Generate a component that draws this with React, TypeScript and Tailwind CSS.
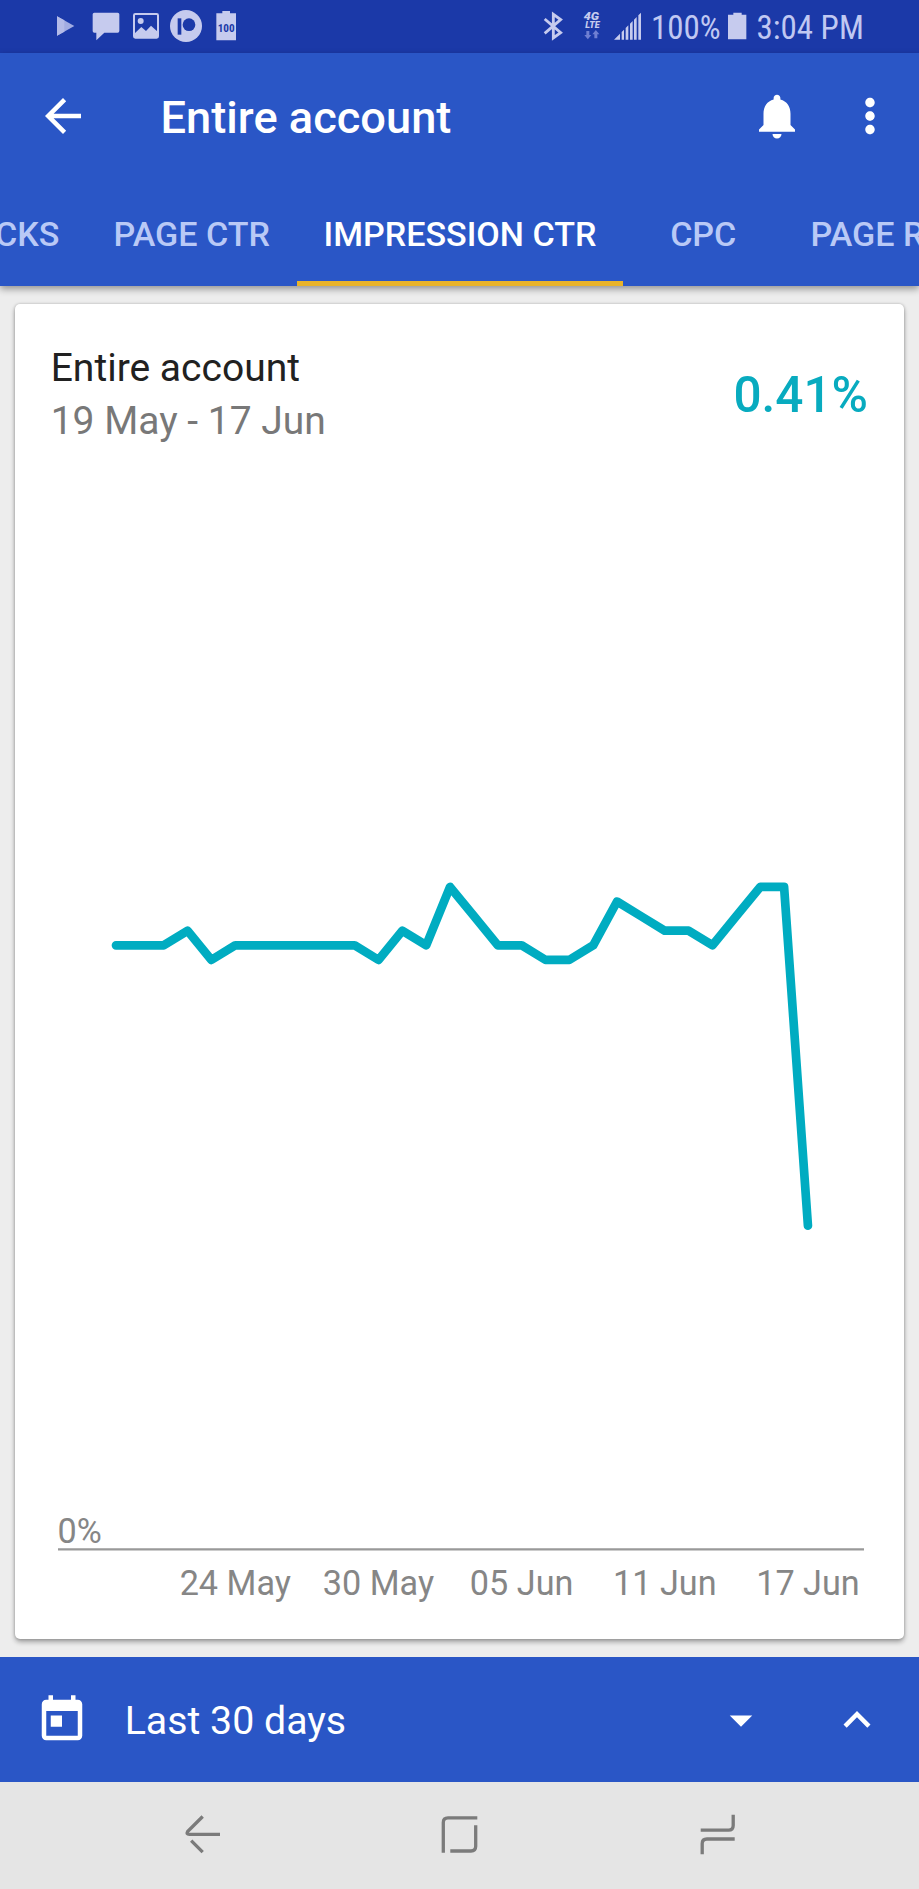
import type { ReactNode } from "react";

const TINT = "#c6cbee";
const STATUS_BG = "#1b39a8";

function MaterialIcon({ d, className }: { d: string; className?: string }) {
  return (
    <svg viewBox="0 0 24 24" className={`size-[54px] shrink-0 fill-white ${className ?? ""}`}>
      <path d={d} />
    </svg>
  );
}

const icons = {
  back: "M20 11H7.83l5.59-5.59L12 4l-8 8 8 8 1.41-1.41L7.83 13H20v-2z",
  bell: "M12 22c1.1 0 2-.9 2-2h-4c0 1.1.89 2 2 2zm6-6v-5c0-3.07-1.64-5.64-4.5-6.32V4c0-.83-.67-1.5-1.5-1.5s-1.5.67-1.5 1.5v.68C7.63 5.36 6 7.92 6 11v5l-2 2v1h16v-1l-2-2z",
  more: "M12 8.1c1.16 0 2.1-.94 2.1-2.1S13.160 3.9 12 3.9 9.9 4.840 9.9 6s.94 2.1 2.1 2.1zm0 1.8c-1.160 0-2.1.94-2.1 2.1s.94 2.1 2.1 2.1 2.1-.94 2.1-2.1-.94-2.1-2.1-2.1zm0 6c-1.160 0-2.1.94-2.1 2.1s.94 2.1 2.1 2.1 2.1-.94 2.1-2.1-.94-2.1-2.1-2.1z",
  today: "M19 3h-1V1h-2v2H8V1H6v2H5c-1.11 0-1.99.9-1.99 2L3 19c0 1.1.89 2 2 2h14c1.1 0 2-.9 2-2V5c0-1.100-.9-2-2-2zm0 16H5V8h14v11zM7 10h5v5H7z",
  dropDown: "M7 10l5 5 5-5z",
  expandLess: "M12 8l-6 6 1.41 1.41L12 10.83l4.59 4.58L18 14z",
};

function StatusBar() {
  return (
    <header className="flex h-[53px] shrink-0 items-start bg-[#1b39a8] font-['Roboto_Condensed',Roboto,sans-serif] text-[33px] leading-[56px] text-[#c0c8f2]">
      <svg viewBox="165 0 66 159" className="ml-[55px] h-[53px] w-[22px] shrink-0">
        <path d="M171 49L223 78L171 107Z" fill="#a2ace2" />
        <path d="M171 49L193 61V95L171 107Z" fill="#b4bbe8" />
      </svg>
      <svg viewBox="273 0 90 159" className="ml-[14px] h-[53px] w-[30px] shrink-0" fill={TINT}>
        <path d="M283 38H353Q358 38 358 43V93Q358 98 353 98H313L289 121V98H283Q278 98 278 93V43Q278 38 283 38Z" />
      </svg>
      <svg viewBox="393 0 90 159" className="ml-[10px] h-[53px] w-[30px] shrink-0">
        <rect x="402" y="42" width="72" height="71" rx="4" fill="none" stroke={TINT} strokeWidth="6" />
        <circle cx="422" cy="63" r="9" fill={TINT} />
        <path d="M402 112V102L424 81L438 93L453 77L474 96V112Z" fill={TINT} />
      </svg>
      <svg viewBox="507 0 102 159" className="ml-[8px] h-[53px] w-[34px] shrink-0">
        <circle cx="558" cy="78" r="48" fill={TINT} />
        <rect x="533" y="55" width="11" height="49" fill={STATUS_BG} />
        <circle cx="567" cy="74" r="19" fill={STATUS_BG} />
      </svg>
      <svg viewBox="645 0 69 159" className="ml-[12px] h-[53px] w-[23px] shrink-0">
        <path d="M667 33H690V40H708V121H649V40H667Z" fill={TINT} />
        <text x="678.500" y="95" textAnchor="middle" fontSize="35" fontWeight="700" fontFamily="Roboto Condensed, Roboto" fill={STATUS_BG} textLength="51" lengthAdjust="spacingAndGlyphs">100</text>
      </svg>

      <svg viewBox="64 0 66 159" className="ml-[303.500px] h-[53px] w-[22px] shrink-0" fill="none" stroke={TINT} strokeWidth="8.500">
        <path d="M72 57L120 98L98 114V43L120 59L72 100" />
      </svg>
      <svg viewBox="186 0 60 159" className="ml-[18.700px] h-[53px] w-[20px] shrink-0">
        <g fill={TINT} fontFamily="Roboto" fontStyle="italic" fontWeight="900">
          <text x="191" y="60" fontSize="30" textLength="46" lengthAdjust="spacingAndGlyphs">4G</text>
          <text x="196" y="83" fontSize="26" textLength="43" lengthAdjust="spacingAndGlyphs">LTE</text>
        </g>
        <g fill="#6f7fd2">
          <path d="M199 93H208V105H214L203.500 118L193 105H199Z" />
          <path d="M223 115H232V103H238L227.500 90L217 103H223Z" />
        </g>
      </svg>
      <svg viewBox="276 0 87 159" className="ml-[10.500px] h-[53px] w-[29px] shrink-0" fill={TINT}>
        <path d="M279 119L297 101V119ZM302 96L309 89V119H302ZM314 84L322 76V119H314ZM327 71L335 63V119H327ZM339 59L347 51V119H339ZM352 46L360 38V119H352Z" />
      </svg>
      <span className="ml-[9.200px] w-[70px] shrink-0 whitespace-nowrap">100%</span>
      <svg viewBox="624 0 60 159" className="ml-[6.600px] h-[53px] w-[20px] shrink-0" fill={TINT}>
        <path d="M643 38H668V44H682V118H627V44H643Z" />
      </svg>
      <span className="ml-[9px] whitespace-nowrap">3:04 PM</span>
    </header>
  );
}

function Tab({ className, active, children }: { className: string; active?: boolean; children: ReactNode }) {
  return (
    <div
      className={`flex h-full shrink-0 items-center whitespace-nowrap border-b-[5px] pt-[8px] ${
        active ? "border-[#e8b32a] text-white" : "border-transparent text-[#b9c9f6]"
      } ${className}`}
    >
      {children}
    </div>
  );
}

function AppBar() {
  return (
    <div className="z-10 shrink-0 overflow-visible bg-[#2a56c6] shadow-[0_3px_7px_rgba(0,0,0,0.38)]">
      <div className="flex h-[126px] items-center">
        <MaterialIcon d={icons.back} className="ml-[35.600px]" />
        <h1 className="ml-[71px] pt-[4px] text-[45.200px] leading-[54px] font-medium text-white">Entire account</h1>
        <MaterialIcon d={icons.bell} className="ml-auto" />
        <MaterialIcon d={icons.more} className="mr-[22px] ml-[39.300px]" />
      </div>
      <div className="flex h-[107px] overflow-hidden text-[34.100px] leading-[40px] font-medium">
        <Tab className="w-[86.500px] justify-end pr-[27px]">CLICKS</Tab>
        <Tab className="w-[210.500px] justify-end pr-[27px]">PAGE CTR</Tab>
        <Tab className="w-[326px] justify-center" active>IMPRESSION CTR</Tab>
        <Tab className="w-[160.500px] justify-center">CPC</Tab>
        <Tab className="pl-[27px]">PAGE RPM</Tab>
      </div>
    </div>
  );
}

const BASELINE_Y = 945.3;
const STEP_X = 23.86;
const STEP_Y = 14.6;
const levels = [
  0, 0, 0, 1, -1, 0, 0, 0, 0, 0, 0, -1, 1, 0, 4, 2, 0, 0, -1, -1, 0, 3, 2, 1, 1, 0, 2, 4, 4, -19.2,
];
const linePoints = levels.map((v, i) => `${116 + i * STEP_X},${BASELINE_Y - v * STEP_Y}`).join(" ");
const ticks = [
  { label: "24 May", index: 5 },
  { label: "30 May", index: 11 },
  { label: "05 Jun", index: 17 },
  { label: "11 Jun", index: 23 },
  { label: "17 Jun", index: 29 },
];

function Chart() {
  return (
    <svg viewBox="15 448 889 1191" className="h-[1191px] w-[889px] shrink-0">
      <polyline points={linePoints} fill="none" stroke="#00acc1" strokeWidth="8.700" strokeLinecap="round" strokeLinejoin="round" />
      <line x1="58" x2="864" y1="1549.400" y2="1549.400" stroke="#999999" strokeWidth="2.200" />
      <g fill="#868686" fontFamily="Roboto, sans-serif" fontSize="34.200">
        <text x="57.500" y="1543">0%</text>
        {ticks.map((t) => (
          <text key={t.label} x={116 + t.index * STEP_X} y="1594.500" textAnchor="middle">
            {t.label}
          </text>
        ))}
      </g>
    </svg>
  );
}

function ReportCard() {
  return (
    <section className="mt-[18px] ml-[15px] flex h-[1335px] w-[889px] flex-col rounded-[5px] bg-white shadow-[0_3px_5px_rgba(0,0,0,0.32),0_0_3px_rgba(0,0,0,0.22)]">
      <div className="flex h-[144px] shrink-0 items-end justify-between pr-[36px] pl-[35.700px]">
        <div className="text-[39px] leading-[53px]">
          <h2 className="text-[#212121]">Entire account</h2>
          <p className="text-[#787878]">19 May - 17 Jun</p>
        </div>
        <div className="text-[49.500px] leading-[105px] font-medium text-[#08abbf]">0.41%</div>
      </div>
      <Chart />
    </section>
  );
}

function DateRangeBar() {
  return (
    <div className="flex h-[125px] shrink-0 items-center bg-[#2a56c6] text-white">
      <MaterialIcon d={icons.today} className="ml-[35.300px]" />
      <span className="ml-[35.400px] pt-[2.500px] text-[39.300px] leading-[50px]">Last 30 days</span>
      <MaterialIcon d={icons.dropDown} className="ml-auto" />
      <MaterialIcon d={icons.expandLess} className="mr-[35.500px] ml-[61.700px]" />
    </div>
  );
}

function NavigationBar() {
  return (
    <nav className="flex h-[107px] shrink-0 items-start bg-[#e5e5e5] pt-[29px]">
      <svg viewBox="180 1811 46 48" className="ml-[180px] h-[48px] w-[46px]" fill="none" stroke="#7b7b7b" strokeWidth="3.300">
        <path d="M202.700 1816.500L187.600 1831.600Q186 1834.400 189.300 1834.400H220M191.200 1840.600L202.700 1852.200" />
      </svg>
      <svg viewBox="436 1811 46 48" className="ml-[210px] h-[48px] w-[46px]" fill="none" stroke="#7b7b7b" strokeWidth="3.300">
        <path d="M443.300 1852.700V1822.500Q443.300 1817.800 448 1817.800H477.300M475.700 1825.200V1846.300Q475.700 1851 471 1851H450.300" />
      </svg>
      <svg viewBox="695 1811 46 48" className="ml-[213px] h-[48px] w-[46px]" fill="none" stroke="#7b7b7b" strokeWidth="3.300">
        <path d="M700.700 1830.200H728.500Q733.200 1830.200 733.200 1825.500V1814.700M702.200 1854.200V1843.700Q702.200 1839 706.900 1839H734.700" />
      </svg>
    </nav>
  );
}

export default function App() {
  return (
    <div className="flex h-[1889px] w-[919px] flex-col overflow-hidden bg-[#ededed] font-[Roboto,sans-serif]">
      <StatusBar />
      <AppBar />
      <main className="h-[1371px] shrink-0">
        <div className="flex flex-col">
          <ReportCard />
        </div>
      </main>
      <DateRangeBar />
      <NavigationBar />
    </div>
  );
}
